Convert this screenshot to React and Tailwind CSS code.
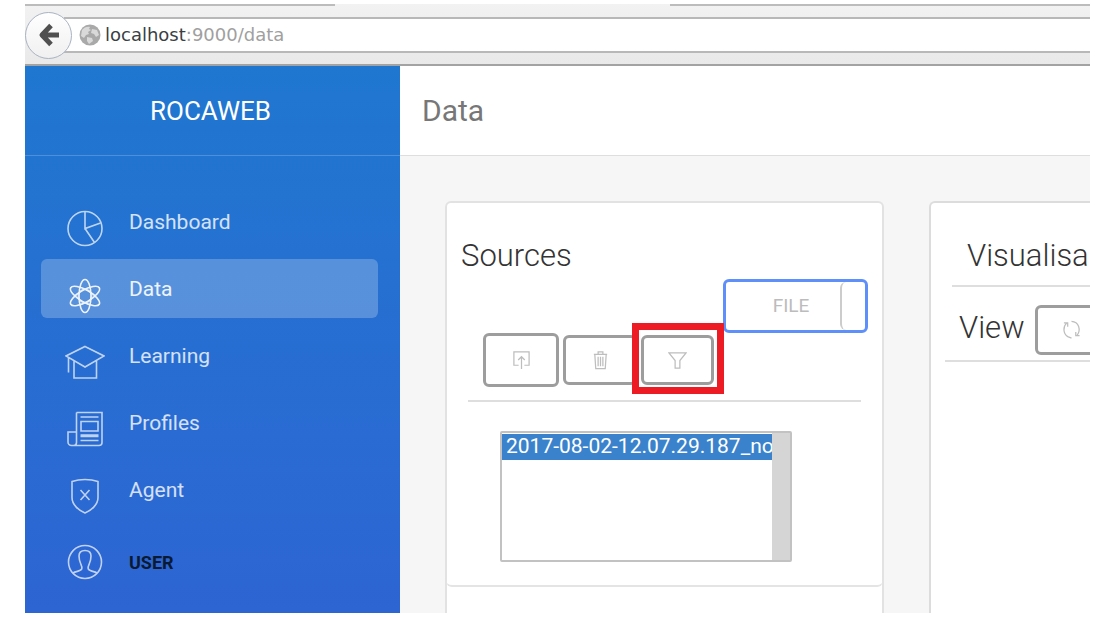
import React from "react";

const stroke = { fill: "none", stroke: "currentColor", strokeWidth: 1.6 };

function PieIcon() {
  return (
    <svg className="size-10" viewBox="0 0 40 40" {...stroke} aria-hidden="true">
      <circle cx="20" cy="20.500" r="17" />
      <path d="M20 3.500v17l15.500-5.500M20 20.500l9.500 14" />
    </svg>
  );
}

function AtomIcon() {
  return (
    <svg className="size-10" viewBox="0 0 40 40" {...stroke} aria-hidden="true">
      <ellipse cx="20" cy="21" rx="6" ry="16.500" />
      <ellipse cx="20" cy="21" rx="6" ry="16.500" transform="rotate(60 20 21)" />
      <ellipse cx="20" cy="21" rx="6" ry="16.500" transform="rotate(120 20 21)" />
      <circle cx="20" cy="21" r="7" strokeWidth="0.8" />
    </svg>
  );
}

function StudyIcon() {
  return (
    <svg className="size-10" viewBox="0 0 40 40" {...stroke} aria-hidden="true">
      <path d="M20 4.500l19 9.500-19 11-19-11zM3.500 15.500v15M9 18.500V36h22.500V18.500" />
    </svg>
  );
}

function NewsIcon() {
  return (
    <svg className="size-10" viewBox="0 0 40 40" {...stroke} aria-hidden="true">
      <path d="M11.500 3.500h25.500v30a3 3 0 0 1-3 3H6.500a3.500 3.500 0 0 1-3.500-3.500V23h8.500v10.500a3 3 0 0 1-3 3M11.500 3.500V23" />
      <path d="M16 12.500h17v9.500H16zM15.500 8h18M15.500 26h18M15.500 27.500h18M15.500 31.500h18" />
    </svg>
  );
}

function ShieldIcon() {
  return (
    <svg className="size-10" viewBox="0 0 40 40" {...stroke} aria-hidden="true">
      <path d="M20 3.500c4 0 8.500.5 13 2v16C33 29 26 34.500 20 37 14 34.500 7 29 7 21.500v-16c4.500-1.500 9-2 13-2z" />
      <path d="M15.500 14l9 10M24.500 14l-9 10" />
    </svg>
  );
}

function UserIcon() {
  return (
    <svg className="size-10" viewBox="0 0 40 40" {...stroke} aria-hidden="true">
      <circle cx="20" cy="19" r="16.500" />
      <path d="M8 30c3-2 8-1.500 8.800-4.200.5-1.800-.3-3.300-1-4.800-.9-2-1.800-4.500-1.800-8 0-3.500 2.500-5.500 6-5.500s6 2 6 5.500c0 3.500-.9 6-1.800 8-.7 1.500-1.500 3-1 4.800.8 2.700 5.800 2.200 8.800 4.200" />
    </svg>
  );
}

const nav = [
  { label: "Dashboard", Icon: PieIcon },
  { label: "Data", Icon: AtomIcon, active: true },
  { label: "Learning", Icon: StudyIcon },
  { label: "Profiles", Icon: NewsIcon },
  { label: "Agent", Icon: ShieldIcon },
  { label: "USER", Icon: UserIcon, strong: true },
];

function BrowserBar() {
  return (
    <div className="flex h-[62px] flex-col border-b-2 border-[#a3a3a3] bg-linear-to-b from-[#f2f2f2] to-[#e9e9e9]">
      <div className="flex h-[2px] justify-between">
        <div className="w-[310px] bg-[#bcbcbc]" />
        <div className="w-[420px] bg-[#bcbcbc]" />
      </div>
      <div className="flex flex-1 items-center">
        <button
          type="button"
          aria-label="Back"
          className="z-10 flex size-[47px] shrink-0 items-center justify-center rounded-full border border-[#a9b3c2] bg-linear-to-b from-white to-[#f0f0f0]"
        >
          <svg className="size-6" viewBox="0 0 24 24" fill="none" stroke="#505050" strokeWidth="5" strokeLinejoin="round" aria-hidden="true">
            <path d="M14 2.500L5 12l9 9.500M5 12h17" />
          </svg>
        </button>
        <form className="-ml-2 flex h-9 flex-1 items-center gap-1 border-y-2 border-[#b8b8b8] bg-white pl-[15px]">
          <svg className="size-[22px] shrink-0" viewBox="0 0 22 22" aria-hidden="true">
            <circle cx="11" cy="11" r="10.500" fill="#a9a9a9" />
            <path d="M3 6c2-3 6-4 8-3l-1 2 2 1-3 2 1 2-3 1-2 3-3-2zM13 5l5 1 2 5-3 2-2-3-3-1zM8 13l5 1 1 3-4 3-2-3z" fill="#d9d9d9" />
          </svg>
          <p className="pb-px font-['DejaVu_Sans',sans-serif] text-[18px] leading-6 text-[#a0a0a0]">
            <span className="text-[#3a3f44]">localhost</span>:9000/data
          </p>
        </form>
      </div>
    </div>
  );
}

function Sidebar() {
  return (
    <aside className="w-[375px] shrink-0 bg-linear-to-b from-[#1f77d0] to-[#2d65d3] text-white">
      <div className="flex h-[90px] items-center justify-center border-b border-white/20 pr-1 text-[26px] leading-8">
        ROCAWEB
      </div>
      <nav className="flex flex-col gap-2 px-4 pt-9">
        {nav.map(({ label, Icon, active, strong }) => (
          <a
            key={label}
            href="#"
            className={
              active
                ? "mr-1.5 flex h-[59px] items-center gap-6 rounded-md bg-white/23 pl-6"
                : "mr-1.5 flex h-[59px] items-center gap-6 pl-6"
            }
          >
            <span className={active ? "pt-3 opacity-90" : "pt-3 opacity-70"}>
              <Icon />
            </span>
            <span
              className={
                strong
                  ? "pt-3 text-[18px] leading-6 font-bold text-[#0b1a33]"
                  : active
                    ? "text-[21px] leading-6 text-white/90"
                    : "text-[21px] leading-6 text-white/80"
              }
            >
              {label}
            </span>
          </a>
        ))}
      </nav>
    </aside>
  );
}

function ToolButton({ label, children, className = "" }) {
  return (
    <button
      type="button"
      aria-label={label}
      className={`flex shrink-0 items-center justify-center rounded-md border-3 border-[#9d9d9d] bg-white text-[#bdbdbd] ${className}`}
    >
      <svg className="size-[19px]" viewBox="0 0 20 20" fill="none" stroke="currentColor" strokeWidth="1.300" aria-hidden="true">
        {children}
      </svg>
    </button>
  );
}

function Sources() {
  return (
    <section className="w-[439px] shrink-0 rounded-t-md border-x-2 border-t-2 border-[#e2e2e2] bg-white">
      <div className="-mx-px rounded-md border-b-2 border-[#e4e4e4] pb-[23px]">
        <h2 className="px-[15px] pt-[33px] text-[31px] leading-10 font-light text-[#333]">Sources</h2>
        <div className="flex justify-end pt-[3px] pr-[15px]">
          <button
            type="button"
            className="flex h-[54px] w-[145px] overflow-hidden rounded-md border-3 border-[#5f90fa] bg-white text-[19px] leading-6 text-[#bcbcbc]"
          >
            <span className="flex h-full flex-1 items-center justify-center pl-4">FILE</span>
            <span className="h-full w-[25px] rounded-l-md border-l-2 border-[#ccc]" />
          </button>
        </div>
        <div className="mr-[22px] ml-[22px] flex items-center gap-1 border-b-2 border-[#dedede] pb-[13px] pl-[15px]">
          <ToolButton label="Upload" className="h-[54px] w-[76px]">
            <path d="M7 15H2V1h16v14h-5M10 19V6M6.500 9.500L10 6l3.500 3.500" />
          </ToolButton>
          <div className="relative flex gap-1">
            <ToolButton label="Delete" className="h-[50px] w-[74px]">
              <path d="M4 3.500l1 15h10l1-15zM3 3.500h14M7.500 3V1h5v2M7.500 6v10M10 6v10M12.500 6v10" />
            </ToolButton>
            <ToolButton label="Filter" className="h-[50px] w-[73px]">
              <path d="M1 2h18l-6.500 8v8h-5v-8z" />
            </ToolButton>
            <div className="pointer-events-none absolute -top-3 -right-[10px] h-[71px] w-[92px] border-7 border-[#ed1c24]" />
          </div>
        </div>
        <div className="mt-[29px] ml-[54px] flex h-[131px] w-[292px] rounded-xs border-2 border-[#c2c2c2] bg-[#d5d5d5]">
          <select
            size={4}
            aria-label="Source files"
            defaultValue="file"
            className="min-w-0 flex-1 appearance-none overflow-hidden bg-white pt-px text-[21px] outline-none"
          >
            <option
              value="file"
              className="h-[26px] px-1 py-0 text-[21px] leading-6 checked:bg-[#3a83cc] checked:bg-linear-to-b checked:from-[#3a83cc] checked:to-[#3a83cc] checked:text-white"
            >
              2017-08-02-12.07.29.187_no
            </option>
          </select>
          <div className="w-[18px] shrink-0" />
        </div>
      </div>
    </section>
  );
}

function Visualisation() {
  return (
    <section className="min-w-0 flex-1 overflow-hidden rounded-tl-md border-t-2 border-l-2 border-[#dcdcdc] bg-white whitespace-nowrap text-[#333]">
      <h2 className="ml-[21px] h-[84px] border-b-2 border-[#dedede] pt-[33px] pl-[15px] text-[31px] leading-10 font-light">
        Visualisa
      </h2>
      <div className="ml-[14px] flex h-[75px] items-center gap-[10px] border-b-2 border-[#dedede] pt-3 pl-[14px]">
        <h3 className="pb-1 text-[31px] leading-10 font-light">View</h3>
        <ToolButton label="Refresh" className="h-[50px] w-[74px]">
          <path d="M6 17.500C1 14 .8 7 5 3M2 3h4v4M10 1.500c8 .5 10 9 6 14.500M18.500 16.500h-4v-4M6 17.500l4 1.500" />
        </ToolButton>
      </div>
    </section>
  );
}

export default function App() {
  return (
    <div className="flex min-h-screen flex-col bg-white px-[25px] pt-1 pb-[5px] font-[Roboto,sans-serif]">
      <BrowserBar />
      <div className="flex flex-1">
        <Sidebar />
        <main className="flex min-w-0 flex-1 flex-col bg-[#f6f6f6]">
          <header className="flex h-[90px] items-center border-b border-[#dedede] bg-white px-[22px]">
            <h1 className="text-[30px] leading-9 text-[#777]">Data</h1>
          </header>
          <div className="flex flex-1 gap-[45px] overflow-hidden pt-[45px] pl-[45px]">
            <Sources />
            <Visualisation />
          </div>
        </main>
      </div>
    </div>
  );
}
